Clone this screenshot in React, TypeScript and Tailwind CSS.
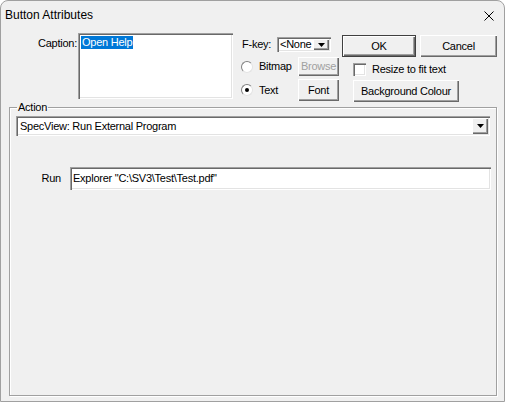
import type { ReactNode } from "react";

const sunken =
  "bg-white shadow-[inset_1px_1px_0_#a0a0a0,inset_2px_2px_0_#696969,inset_-1px_-1px_0_#ffffff,inset_-2px_-2px_0_#e3e3e3]";
const raised =
  "bg-[#f0f0f0] shadow-[inset_1px_1px_0_#ffffff,inset_-1px_-1px_0_#696969,inset_-2px_-2px_0_#a0a0a0]";

function Button({ children, className, disabled }: { children: ReactNode; className: string; disabled?: boolean }) {
  return (
    <div
      className={`flex items-center justify-center ${raised} ${disabled ? "text-[#a0a0a0]" : "text-black"} ${className}`}
    >
      {children}
    </div>
  );
}

function Arrow() {
  return (
    <div className={`flex h-full w-[16px] items-center justify-center ${raised}`}>
      <svg width="7" height="4" viewBox="0 0 7 4">
        <path d="M0 0h7L3.5 4z" fill="#000" />
      </svg>
    </div>
  );
}

function Radio({ checked, label }: { checked?: boolean; label: string }) {
  return (
    <div className="flex items-center">
      <div className="flex h-[12px] w-[12px] items-center justify-center rounded-full border border-t-[#808080] border-l-[#808080] border-r-[#e3e3e3] border-b-[#e3e3e3] bg-white">
        {checked && <div className="h-[4px] w-[4px] rounded-full bg-black" />}
      </div>
      <span className="ml-[6px]">{label}</span>
    </div>
  );
}

export default function App() {
  return (
    <div
      className="flex h-[402px] w-[505px] flex-col overflow-hidden rounded-t-[8px] border border-[#a0a0a0] bg-[#f0f0f0] text-[11px] leading-[13px] tracking-[-0.25px] text-black"
      style={{ fontFamily: '"Liberation Sans", Arial, sans-serif' }}
    >
      {/* title bar */}
      <div className="flex h-[29px] shrink-0 items-center justify-between pl-[4px] pr-[10px] text-[12px] tracking-normal">
        <span>Button Attributes</span>
        <svg width="10" height="10" viewBox="0 0 10 10">
          <path d="M0.5 0.5l9 9M9.5 0.5l-9 9" stroke="#000" strokeWidth="1" />
        </svg>
      </div>

      {/* top section */}
      <div className="flex h-[71px] shrink-0 items-start pt-[3px]">
        <div className="w-[76px] pt-[4px] text-right">Caption:</div>
        <div className={`ml-[1px] h-[66px] w-[155px] pl-[3px] pt-[3px] ${sunken}`}>
          <span className="inline-block bg-[#0078d7] px-[1px] text-white">Open Help</span>
        </div>

        <div className="ml-[8px] flex w-[98px] flex-col">
          <div className="mt-[4px] flex items-center">
            <span className="ml-[1px] w-[35px]">F-key:</span>
            <div className={`flex h-[15px] w-[54px] items-stretch p-[2px] pr-[2px] ${sunken}`}>
              <span className="flex-1 overflow-hidden pl-[1px] leading-[11px]">&lt;None</span>
              <Arrow />
            </div>
          </div>
          <div className="mt-[5px] flex items-center justify-between">
            <Radio label="Bitmap" />
            <Button disabled className="h-[19px] w-[41px]">
              Browse
            </Button>
          </div>
          <div className="mt-[3px] flex items-center justify-between">
            <Radio checked label="Text" />
            <Button className="h-[22px] w-[41px]">Font</Button>
          </div>
        </div>

        <div className="ml-[3px] flex flex-col">
          <div className="mt-[2px] flex gap-[4px]">
            <div className="border border-[#404040]">
              <Button className="h-[20px] w-[72px]">OK</Button>
            </div>
            <Button className="h-[22px] w-[77px]">Cancel</Button>
          </div>
          <div className="ml-[11px] mt-[6px] flex items-center">
            <div className={`h-[13px] w-[13px] ${sunken}`} />
            <span className="ml-[6px]">Resize to fit text</span>
          </div>
          <Button className="ml-[11px] mt-[4px] h-[22px] w-[106px]">Background Colour</Button>
        </div>
      </div>

      {/* action group */}
      <fieldset className="mb-[5px] ml-[8px] mr-[7px] flex-1 border border-[#a0a0a0] px-[6px] shadow-[inset_1px_1px_0_#ffffff,1px_1px_0_#ffffff]">
        <legend className="ml-[1px] px-[1px]">Action</legend>
        <div className={`mt-[2px] flex h-[20px] items-stretch p-[2px] ${sunken}`}>
          <span className="flex flex-1 items-center pl-[2px]">SpecView: Run External Program</span>
          <Arrow />
        </div>
        <div className="mt-[31px] flex items-center">
          <span className="w-[45px] text-right">Run</span>
          <div className={`ml-[9px] mr-[-1px] flex h-[23px] flex-1 items-center pl-[3px] ${sunken}`}>
            Explorer "C:\SV3\Test\Test.pdf"
          </div>
        </div>
      </fieldset>
    </div>
  );
}
